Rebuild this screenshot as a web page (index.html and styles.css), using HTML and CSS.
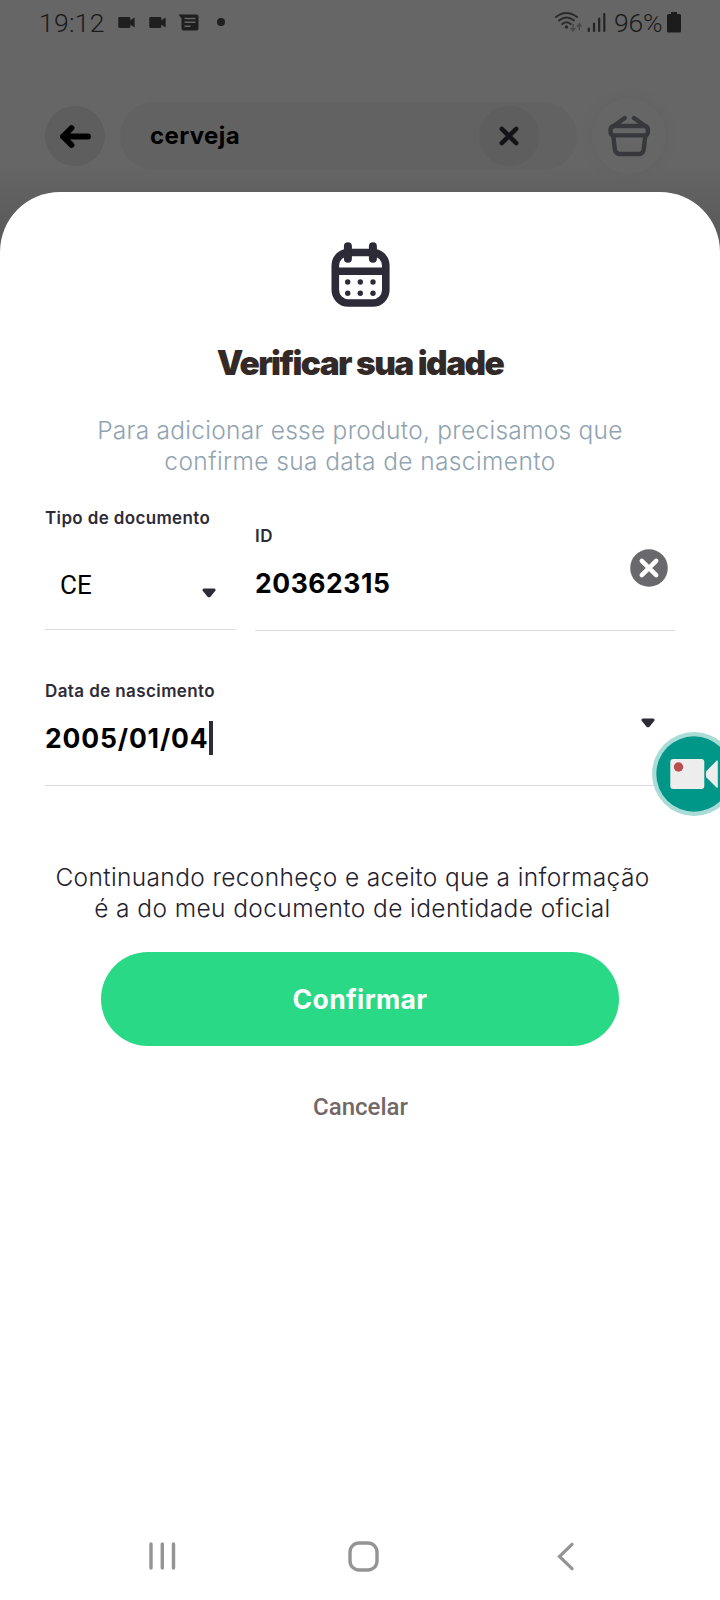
FILE: index.html
```html
<!DOCTYPE html>
<html lang="pt-BR">
<head>
<meta charset="utf-8">
<title>Verificar sua idade</title>
<link rel="stylesheet" href="styles.css">
</head>
<body>
<div class="screen">
  <header class="backdrop">
    <div class="status">
      <span class="clock">19:12</span>
      <svg class="notifs" width="110" height="18" viewBox="118 13 110 18" fill="#1f1f1f">
        <rect x="118.3" y="17" width="12" height="11" rx="1.2"/><path d="M130 20.5l4.6-3v10l-4.600-3z"/>
        <rect x="149.300" y="17" width="12" height="11" rx="1.2"/><path d="M161 20.500l4.600-3v10l-4.600-3z"/>
        <path d="M178.500 14.500h18q2 0 2 2v12q0 2-2 2h-13q-2 0-2-2v-10z"/>
        <path d="M184.500 18.500h11M184.500 22.300h11M184.500 26.200h6" stroke="#666" stroke-width="1.500"/>
        <circle cx="221" cy="22" r="4"/>
      </svg>
      <svg class="signal" width="54" height="24" viewBox="554 10 54 24" fill="none">
        <path d="M556 17q10.500-8 21 0M559 20.500q7.500-6 15 0M562.300 24q4.200-3.400 8.400 0" stroke="#2b2b2b" stroke-width="2" stroke-linecap="round"/>
        <circle cx="566.500" cy="27" r="1.700" fill="#2b2b2b"/>
        <path d="M573 24v6M570.700 28l2.300 2.800 2.300-2.800M579.300 30v-5.500M577 26.700l2.300-2.800 2.300 2.800" stroke="#484848" stroke-width="1.500"/>
        <path d="M588.800 28.500v2.500M594 23.500v7.500M599.200 18.500v12.500M604.300 14v17" stroke="#242424" stroke-width="2.200" stroke-linecap="round"/>
      </svg>
      <span class="percent">96%</span>
      <svg class="battery" width="14" height="21" viewBox="0 0 14 21"><path d="M4 0h6v2h2.500q1.500 0 1.500 1.500v15.500q0 1.500-1.500 1.500h-11q-1.500 0-1.500-1.500V3.500Q0 2 1.500 2H4z" fill="#1c1c1c"/></svg>
    </div>
    <div class="search-row">
      <div class="round"><svg width="34" height="26" viewBox="0 0 34 26"><path d="M30 13.500H5M13.500 5L5 13.500l8.500 8.500" fill="none" stroke="#000" stroke-width="5.800" stroke-linecap="round" stroke-linejoin="round"/></svg></div>
      <div class="search">
        <span class="query">cerveja</span>
        <div class="round clear"><svg width="20" height="20" viewBox="0 0 20 20"><path d="M2.800 2.800l14.400 14.400M17.200 2.800L2.800 17.200" stroke="#141418" stroke-width="4.500" stroke-linecap="round"/></svg></div>
      </div>
      <div class="basket">
        <svg width="44" height="42" viewBox="0 0 44 42" fill="none" stroke="#37383c" stroke-width="4.400" stroke-linecap="round" stroke-linejoin="round">
          <path d="M17.700 3L6 11.500M27 3l12 8.500M7 11h30.500q3.500 0 3.500 4.700t-3.500 4.700H7q-3.500 0-3.500-4.700T7 11z"/>
          <path d="M6.300 21l1.500 13q.6 5 5 5H32q4.200 0 4.800-5l1.500-13"/>
        </svg>
      </div>
    </div>
  </header>

  <main class="sheet">
    <svg class="calendar" width="60" height="66" viewBox="0 0 60 66" fill="none" stroke="#2e2b38" stroke-linecap="round">
      <rect x="5.300" y="10.500" width="50.500" height="50.500" rx="13" stroke-width="7.600"/>
      <path d="M6 29.300h49" stroke-width="7.400" stroke-linecap="butt"/>
      <path d="M17.900 4.300v12.500M42.900 4.300v12.500" stroke-width="8"/>
      <g fill="#2e2b38" stroke="none"><circle cx="17.700" cy="40" r="2.700"/><circle cx="30.300" cy="40" r="2.700"/><circle cx="43" cy="40" r="2.700"/><circle cx="17.700" cy="51.300" r="2.700"/><circle cx="30.300" cy="51.300" r="2.700"/><circle cx="43" cy="51.300" r="2.700"/></g>
    </svg>
    <h1 class="title">Verificar sua idade</h1>
    <p class="intro"><span class="intro-a">Para adicionar esse produto, precisamos que</span><br><span class="intro-b">confirme sua data de nascimento</span></p>

    <form class="form">
      <div class="doc-row">
        <div class="field doc-type">
          <label class="label label-type">Tipo de documento</label>
          <div class="select"><span>CE</span>
            <svg class="caret" width="14" height="10" viewBox="0 0 14 10"><path d="M2 .5h10q2 0 1.500 2L8.500 8.700q-1.500 1.300-3 0L.5 2.500Q0 .5 2 .5z" fill="#2e2b38"/></svg>
          </div>
        </div>
        <div class="field doc-id">
          <div class="id-text">
            <label class="label label-id">ID</label>
            <div class="value value-id">20362315</div>
          </div>
          <svg class="erase" width="38" height="38" viewBox="0 0 38 38"><circle cx="19" cy="19" r="18.800" fill="#69686d"/><path d="M11.800 11.800l14.400 14.400M26.200 11.800L11.800 26.200" stroke="#fff" stroke-width="4.500" stroke-linecap="round"/></svg>
        </div>
      </div>
      <div class="field birth">
        <div>
          <label class="label label-birth">Data de nascimento</label>
          <div class="value value-date"><span>2005/01/04</span><i class="cursor"></i></div>
        </div>
        <svg class="caret" width="14" height="10" viewBox="0 0 14 10"><path d="M2 .5h10q2 0 1.500 2L8.500 8.700q-1.500 1.300-3 0L.5 2.500Q0 .5 2 .5z" fill="#2e2b38"/></svg>
      </div>
    </form>

    <p class="consent"><span class="consent-a">Continuando reconheço e aceito que a informação</span><br><span class="consent-b">é a do meu documento de identidade oficial</span></p>
    <button class="confirm">Confirmar</button>
    <button class="cancel">Cancelar</button>
  </main>

  <nav class="nav">
    <svg width="27" height="28" viewBox="0 0 27 28"><path d="M2 2v24M13.300 2v24M24.500 2v24" stroke="#949494" stroke-width="3.400" stroke-linecap="round"/></svg>
    <svg class="home" width="31" height="31" viewBox="0 0 31 31"><rect x="2" y="2" width="27" height="27" rx="9" fill="none" stroke="#949494" stroke-width="3.400"/></svg>
    <svg width="17" height="29" viewBox="0 0 17 29"><path d="M15 2.300L2.500 14.500 15 26.700" fill="none" stroke="#949494" stroke-width="3.200" stroke-linecap="round"/></svg>
  </nav>

  <svg class="recorder" width="68" height="86" viewBox="652 731 68 86">
    <circle cx="694" cy="774" r="42" fill="#a9dcd6"/><circle cx="694" cy="774" r="37.700" fill="#009688"/>
    <rect x="670.300" y="759" width="34" height="30" rx="3" fill="#ededed"/>
    <path d="M706 771.500l10.500-10.800q1.300-1.200 1.300.6v25.500q0 1.800-1.300.6L706 777z" fill="#ededed"/>
    <circle cx="678.500" cy="767" r="4.700" fill="#b94d4f"/>
  </svg>
</div>
</body>
</html>
```

FILE: styles.css
```css
* { box-sizing: border-box; }
body { margin: 0; background: #fff; font-family: Inter, "Liberation Sans", sans-serif; }
h1, p { margin: 0; }
svg { display: block; flex: none; }
button { border: 0; padding: 0; background: none; font: inherit; }

.screen { position: relative; width: 720px; height: 1600px; display: flex; flex-direction: column; overflow: hidden; }

.backdrop { height: 252px; flex: none; background: linear-gradient(#666 0, #666 165px, #606060 195px, #595959 252px); }
.status { height: 46px; padding: 0 39px 2px 39px; display: flex; align-items: center; font-family: Roboto, sans-serif; font-weight: 300; font-size: 26.500px; color: #1a1a1a; }
.clock { width: 79px; letter-spacing: .3px; white-space: nowrap; }
.signal { margin-left: auto; }
.percent { margin: 0 4px 0 6px; width: 49px; letter-spacing: -.2px; white-space: nowrap; }

.search-row { display: flex; align-items: center; padding: 52px 54px 0 45px; }
.round { width: 60px; height: 60px; border-radius: 50%; background: #5e5e5e; display: flex; align-items: center; justify-content: center; flex: none; }
.search { width: 457px; height: 68px; margin-left: 15px; border-radius: 34px; background: #626262; display: flex; align-items: center; justify-content: space-between; padding: 0 38px 0 30px; }
.query { padding-bottom: 2px; font-size: 24px; font-weight: 700; letter-spacing: .4px; color: #000; }
.clear { background: #5e5e5e; }
.basket { width: 74px; height: 76px; margin-left: 15px; border-radius: 50%; background: #666; box-shadow: 0 0 8px #626262; display: flex; align-items: center; justify-content: center; }

.sheet { flex: 1; margin-top: -60px; padding: 50px 45px 0; background: #fff; border-radius: 60px 60px 0 0; display: flex; flex-direction: column; align-items: center; }
.title { margin-top: 35px; height: 40px; line-height: 40px; font-size: 33.500px; font-weight: 900; letter-spacing: -1.600px; color: #332927; white-space: nowrap; }
.intro { margin-top: 32px; font-size: 24.500px; line-height: 31px; font-weight: 300; text-align: center; color: #90a3b1; white-space: nowrap; }
.intro-a { letter-spacing: .27px; }
.intro-b { letter-spacing: .39px; }

.form { width: 630px; margin-top: 30px; }
.doc-row { display: flex; justify-content: space-between; align-items: flex-start; }
.field { border-bottom: 1px solid #dcdcdc; }
.label { display: block; height: 22px; line-height: 22px; font-size: 17px; font-weight: 600; color: #2e2b38; white-space: nowrap; }
.label-type { letter-spacing: .36px; }
.label-id { letter-spacing: .6px; }
.label-birth { letter-spacing: .4px; }
.value { height: 36px; line-height: 36px; font-size: 26.500px; font-weight: 700; color: #000; white-space: nowrap; }
.doc-type { width: 191px; height: 123px; }
.select { margin-top: 36px; height: 40px; padding: 0 20px 0 15px; display: flex; justify-content: space-between; align-items: center; font-family: Roboto, sans-serif; font-size: 26px; color: #000; }
.select .caret { margin-top: 16px; }
.doc-id { width: 420px; height: 124px; padding-right: 7px; display: flex; justify-content: space-between; }
.id-text { padding-top: 18px; }
.value-id { margin-top: 18px; letter-spacing: .55px; }
.erase { margin-top: 42px; }
.birth { margin-top: 49px; height: 106px; padding-right: 20px; display: flex; justify-content: space-between; }
.value-date { margin-top: 18px; display: flex; align-items: center; letter-spacing: .850px; }
.cursor { width: 4px; height: 34px; background: #2e2b38; }
.birth .caret { margin-top: 38px; }

.consent { margin: 76px 15px 0 0; font-size: 24.500px; line-height: 31px; font-weight: 300; text-align: center; color: #24212e; white-space: nowrap; }
.consent-a { letter-spacing: .36px; }
.consent-b { letter-spacing: .4px; }
.confirm { margin-top: 28px; width: 518px; height: 94px; flex: none; border-radius: 47px; background: #29d985; color: #fff; font-size: 26.500px; font-weight: 700; letter-spacing: .35px; }
.cancel { margin: 44px 0 0 1px; height: 34px; line-height: 34px; font-family: Roboto, sans-serif; font-size: 24px; font-weight: 500; color: #736868; }

.nav { height: 86px; padding: 0 146px 2px 149px; display: flex; align-items: center; justify-content: space-between; background: #fff; }
.home { margin-right: 6px; }
.recorder { position: absolute; right: 0; top: 731px; }
```
